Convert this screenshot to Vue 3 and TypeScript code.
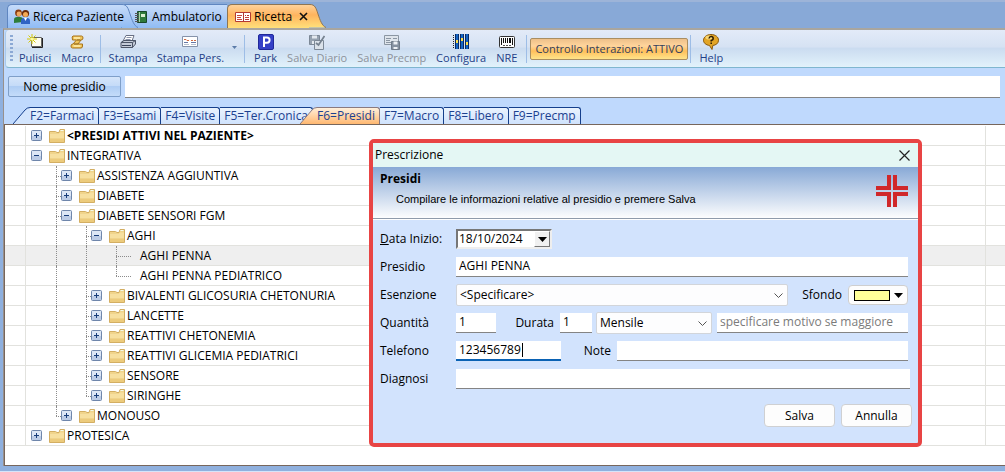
<script setup lang="ts">
import { ref } from 'vue'

interface ToolItem {
  label: string
  icon: string
  disabled?: boolean
  menu?: boolean
}

interface TreeNode {
  label: string
  level: number
  state: 'open' | 'closed' | 'leaf'
  last?: boolean
  bold?: boolean
}

const toolGroups: ToolItem[][] = [
  [
    { label: 'Pulisci', icon: 'new' },
    { label: 'Macro', icon: 'macro' },
  ],
  [
    { label: 'Stampa', icon: 'print' },
    { label: 'Stampa Pers.', icon: 'card', menu: true },
  ],
  [
    { label: 'Park', icon: 'park' },
    { label: 'Salva Diario', icon: 'savediary', disabled: true },
    { label: 'Salva Precmp', icon: 'saveform', disabled: true },
    { label: 'Configura', icon: 'config' },
    { label: 'NRE', icon: 'barcode' },
  ],
]

const sections = ['F2=Farmaci', 'F3=Esami', 'F4=Visite', 'F5=Ter.Cronica', 'F6=Presidi', 'F7=Macro', 'F8=Libero', 'F9=Precmp']
const activeSection = ref('F6=Presidi')

const nodes: TreeNode[] = [
  { label: '<PRESIDI ATTIVI NEL PAZIENTE>', level: 0, state: 'closed', bold: true },
  { label: 'INTEGRATIVA', level: 0, state: 'open' },
  { label: 'ASSISTENZA AGGIUNTIVA', level: 1, state: 'closed' },
  { label: 'DIABETE', level: 1, state: 'closed' },
  { label: 'DIABETE SENSORI FGM', level: 1, state: 'open' },
  { label: 'AGHI', level: 2, state: 'open' },
  { label: 'AGHI PENNA', level: 3, state: 'leaf' },
  { label: 'AGHI PENNA PEDIATRICO', level: 3, state: 'leaf', last: true },
  { label: 'BIVALENTI GLICOSURIA CHETONURIA', level: 2, state: 'closed' },
  { label: 'LANCETTE', level: 2, state: 'closed' },
  { label: 'REATTIVI CHETONEMIA', level: 2, state: 'closed' },
  { label: 'REATTIVI GLICEMIA PEDIATRICI', level: 2, state: 'closed' },
  { label: 'SENSORE', level: 2, state: 'closed' },
  { label: 'SIRINGHE', level: 2, state: 'closed', last: true },
  { label: 'MONOUSO', level: 1, state: 'closed', last: true },
  { label: 'PROTESICA', level: 0, state: 'closed' },
]
const selected = ref('AGHI PENNA')

const search = ref('')
const startDate = ref('18/10/2024')
const item = ref('AGHI PENNA')
const exemption = ref('<Specificare>')
const quantity = ref('1')
const duration = ref('1')
const period = ref('Mensile')
const reason = ref('')
const phone = ref('123456789')
const notes = ref('')
const diagnosis = ref('')
</script>

<template>
  <div class="app">
    <nav class="docs">
      <button class="doc first" type="button">
        <svg class="ic" viewBox="0 0 16 16">
          <circle cx="4.5" cy="4" r="3.4" fill="#8a3c10" /><circle cx="5" cy="5" r="2.4" fill="#f0a860" />
          <path d="M0 14V10.500Q0 8 3 8H6Q9 8 9 10.500V13z" fill="#2e7d3a" />
          <circle cx="11.500" cy="4.500" r="3.600" fill="#6b2a08" /><circle cx="11.500" cy="5.500" r="2.500" fill="#f3a955" />
          <path d="M7 15V12Q7 9 10 9H13Q16 9 16 12V15z" fill="#2f63c4" /><path d="M10 9h3l-1.500 3z" fill="#fff" />
        </svg>
        <span>Ricerca Paziente</span>
        <svg class="slope" viewBox="0 0 18 24"><path d="M0 .5H1C6 .5 7 4 9 10S13 22 17 23.500H0z" fill="url(#tabBlue)" /><path d="M0 .5H1C6 .5 7 4 9 10S13 22 17 23.500" fill="none" stroke="#5f86c0" /></svg>
      </button>
      <button class="doc second" type="button">
        <svg class="ic" viewBox="0 0 16 16">
          <path d="M4.500 2.500h9v11h-9z" fill="#2f7a3c" stroke="#17482a" /><path d="M6.500 3v10" stroke="#a9d6a4" />
          <path d="M2 4.500h4M2 6.500h4M2 8.500h4M2 10.500h4M2 12.500h4" stroke="#555" /><path d="M8 5h4v3H8z" fill="#d8eecf" />
        </svg>
        <span>Ambulatorio</span>
      </button>
      <button class="doc current" type="button">
        <svg class="ic" viewBox="0 0 16 16">
          <path d="M.5 3.500h15v9H.5z" fill="#fff" stroke="#b33a32" /><path d="M8.500 4v8" stroke="#b33a32" />
          <path d="M2 6.500h5M2 8.500h4M2 10.500h5M10 8.500h4" stroke="#c8453c" /><path d="M10 6.500h1M12 6.500h2M10 10.500h4" stroke="#b33a32" />
        </svg>
        <span>Ricetta</span>
        <svg class="close" viewBox="0 0 9 9"><path d="M1 1l7 7M8 1L1 8" stroke="#111" stroke-width="1.600" /></svg>
        <svg class="slope" viewBox="0 0 18 24"><path d="M0 .5H1C6 .5 7 4 9 10S13 22 17 23.500H0z" fill="url(#tabOrange)" /><path d="M0 .5H1C6 .5 7 4 9 10S13 22 17 23.500" fill="none" stroke="#8f7552" /></svg>
      </button>
      <svg class="defs">
        <linearGradient id="tabBlue" x1="0" y1="0" x2="0" y2="1"><stop offset="0" stop-color="#c5dcfa" /><stop offset=".5" stop-color="#aecbf5" /><stop offset="1" stop-color="#8fbcf5" /></linearGradient>
        <linearGradient id="tabOrange" x1="0" y1="0" x2="0" y2="1"><stop offset="0" stop-color="#ffd29a" /><stop offset=".45" stop-color="#ffb45e" /><stop offset="1" stop-color="#ffe07a" /></linearGradient>
      </svg>
    </nav>

    <div class="frame">
      <div class="toolbar">
        <i class="grip"></i>
        <div v-for="(group, g) in toolGroups" :key="g" class="group" :class="'g' + g">
          <button v-for="t in group" :key="t.label" class="tool" :class="{ menu: t.menu }" type="button" :disabled="t.disabled">
            <svg class="ic" viewBox="0 0 16 16">
              <template v-if="t.icon === 'new'">
                <path d="M4.500 3.500h10v9h-10z" fill="#fffef0" stroke="#666" /><path d="M15.500 4v9.500H5" fill="none" stroke="#222" />
                <path d="M5 0v10M0 5h10M1.500 1.500l7 7M8.500 1.500l-7 7" stroke="#d4c800" /><circle cx="5" cy="5" r="1.500" fill="#fffb9c" />
              </template>
              <template v-else-if="t.icon === 'macro'">
                <path d="M4 2h8.500Q14 2 14 4T12 6L9 10h4.500v2Q13.500 14 12 14H3.500Q2 14 2 12T4 10L7.500 6H3.500Q2.500 2 4 2z" fill="#f0c65c" stroke="#a87319" />
                <path d="M5 4h6M4.500 12h7" stroke="#fff0b0" stroke-width="1.500" /><path d="M11.500 6H8M9 10H5" stroke="#7d5310" />
              </template>
              <template v-else-if="t.icon === 'print'">
                <path d="M6 1.500h8L12 7H3z" fill="#fff" stroke="#687084" /><path d="M6.500 3.500h5M5.500 5.500h5" stroke="#8b94aa" />
                <path d="M1 8.500l3-2h11.500V10l-3 3.500H1z" fill="#c4cbd8" stroke="#4c5568" /><path d="M1 8.500h11.500l3-2M12.500 8.500v5" fill="none" stroke="#4c5568" /><path d="M2 11.500h9" stroke="#39435a" />
              </template>
              <template v-else-if="t.icon === 'card'">
                <path d="M.5 2.500h15v10H.5z" fill="#fff" stroke="#8593aa" /><path d="M2 5.500h2l1 1h2M9 6.500h2M12 6.500h2" fill="none" stroke="#cf6a42" />
                <path d="M2 8.500h4M9 8.500h5" stroke="#6677a4" /><path d="M2 10.500h5M9 10.500h5" stroke="#b8c0d0" />
              </template>
              <template v-else-if="t.icon === 'park'">
                <rect x=".5" y=".5" width="15" height="15" rx="1.500" fill="#3540c6" stroke="#20289a" />
                <path d="M6 13V3.500h3a2.600 2.600 0 010 5.200H6" fill="none" stroke="#fff" stroke-width="2" />
              </template>
              <template v-else-if="t.icon === 'savediary'">
                <path d="M.5 1.500h10v9H.5z" fill="#96a2b0" stroke="#7c8896" /><path d="M3 1.500h5v3H3zM3 7h5v3H3z" fill="#e4e9ef" />
                <path d="M5.500 6.500h9v9h-9z" fill="#dbe2ea" stroke="#7c8896" /><path d="M15.500 2L9.500 11l-2.500-2" fill="none" stroke="#76828f" stroke-width="1.800" />
              </template>
              <template v-else-if="t.icon === 'saveform'">
                <path d="M.5 1.500h14v9H.5z" fill="#dfe5ec" stroke="#8b96a3" /><path d="M2 4.500h5M2 6.500h4M2 8.500h5M9 4.500h4" stroke="#8b96a3" />
                <path d="M7.500 7.500h8v8h-8z" fill="#8591a0" stroke="#6f7b89" /><path d="M9.500 7.500h4v3h-4zM9.500 13h4v2h-4z" fill="#edf1f5" />
              </template>
              <template v-else-if="t.icon === 'config'">
                <path d="M2 0h4v15H2zM7 0h4v15H7zM12 0h4v15h-4z" fill="#1766c4" /><path d="M2.500 0v15M5.500 0v15M7.500 0v15M10.500 0v15M12.500 0v15M15.500 0v15" stroke="#082a63" />
                <path d="M.5 1v14" stroke="#222" stroke-dasharray="1 1" /><path d="M3 6h2v3H3zM8 4h2v3H8zM13 8h2v3h-2z" fill="#ffe048" />
              </template>
              <template v-else>
                <rect x=".5" y="2.500" width="15" height="11" rx="1" fill="#fff" stroke="#333" />
                <path d="M2.500 4v7M4.500 4v5M6.500 4v5M8.500 4v5M13.500 4v7" stroke="#111" /><path d="M11 4v5" stroke="#111" stroke-width="2" /><path d="M4 11.500h2M7 11.500h2M10 11.500h2" stroke="#555" />
              </template>
            </svg>
            <span>{{ t.label }}</span>
            <svg v-if="t.menu" class="drop" viewBox="0 0 5 3"><path d="M0 0h5L2.500 3z" fill="#5b7ba8" /></svg>
          </button>
        </div>
        <button class="toggle" type="button" aria-pressed="true">Controllo Interazioni: ATTIVO</button>
        <div class="group help">
          <button class="tool" type="button">
            <svg class="ic" viewBox="0 0 16 16">
              <path d="M8 .5C12.500.5 15.500 3 15.500 6.200S13 11 9.800 11.500L9 15.500 6.500 11.500C3 11 .5 9 .5 6.200S3.500.5 8 .5z" fill="#e2a526" stroke="#8a5a0c" />
              <ellipse cx="6" cy="3.500" rx="3.500" ry="2" fill="#f7d775" /><path d="M6 4.500Q6.300 2.500 8.200 2.500T10.200 4.300 8.200 6.500V7.500M8.200 8.500v1.500" fill="none" stroke="#2c1c04" stroke-width="1.500" />
            </svg>
            <span>Help</span>
          </button>
        </div>
      </div>

      <div class="search">
        <button class="name" type="button">Nome presidio</button>
        <input v-model="search" class="box" type="text" aria-label="Nome presidio" />
      </div>

      <nav class="sections">
        <button v-for="(s, i) in sections" :key="s" type="button" class="section" :class="{ active: s === activeSection }" @click="activeSection = s">
          <svg v-if="i === 0 || s === activeSection" class="slant" viewBox="0 0 17 17">
            <path d="M0 17L12 3Q14 .5 17 .5V17z" :fill="s === activeSection ? 'url(#secOrange)' : '#d3e5fd'" />
            <path d="M0 17L12 3Q14 .5 17 .5" fill="none" :stroke="s === activeSection ? '#8a7a80' : '#153f8c'" />
          </svg>
          <span>{{ s }}</span>
        </button>
        <svg class="defs"><linearGradient id="secOrange" x1="0" y1="0" x2="0" y2="1"><stop offset="0" stop-color="#fff0dc" /><stop offset="1" stop-color="#ffb871" /></linearGradient></svg>
      </nav>

      <main class="panel">
        <ul class="tree" role="tree">
          <li v-for="n in nodes" :key="n.label" class="row" :class="{ selected: n.label === selected }" role="treeitem" :aria-level="n.level + 1" @click="selected = n.label">
            <i class="margin"></i>
            <i v-for="k in n.level" :key="k" class="indent" :class="{ guide: k > 1 }"></i>
            <span class="knot" :class="{ child: n.level > 0, last: n.last, leaf: n.state === 'leaf' }">
              <button v-if="n.state !== 'leaf'" class="expander" type="button" :aria-label="n.label">
                <svg viewBox="0 0 11 11">
                  <rect x=".5" y=".5" width="10" height="10" rx="1" fill="#dce6f5" stroke="#6f86ab" /><path d="M1 6h9v4H1z" fill="#bccce6" />
                  <path d="M3 5.500h5" stroke="#173c7a" /><path v-if="n.state === 'closed'" d="M5.500 3v5" stroke="#173c7a" />
                </svg>
              </button>
            </span>
            <svg v-if="n.state !== 'leaf'" class="folder" viewBox="0 0 16 14">
              <path d="M.5 2.500h6l1.500 1h2l1-3h4.500v13H.5z" fill="#f0d48c" stroke="#d3ae62" /><path d="M1 5h8.500l1.500-1.500h4V9H1z" fill="#f7e0a0" />
              <path d="M1 10h14v3H1z" fill="#eccb7c" /><path d="M11.500 1.500h3" stroke="#f4fbe8" />
            </svg>
            <b v-if="n.bold" class="text">{{ n.label }}</b>
            <span v-else class="text">{{ n.label }}</span>
          </li>
        </ul>

        <form class="dialog" role="dialog" aria-labelledby="dlg-title" @submit.prevent>
          <header class="bar">
            <span id="dlg-title">Prescrizione</span>
            <button class="x" type="button" aria-label="Chiudi"><svg viewBox="0 0 11 11"><path d="M.5.5l10 10M10.500.5l-10 10" stroke="#222" stroke-width="1.200" /></svg></button>
          </header>
          <div class="banner">
            <div>
              <h1>Presidi</h1>
              <p>Compilare le informazioni relative al presidio e premere Salva</p>
            </div>
            <svg class="cross" viewBox="0 0 32 32"><path d="M11 0h4v15H0v-4h11zM17 0h4v11h11v4H17zM0 17h15v15h-4V21H0zM17 17h15v4H21v11h-4z" fill="#d0282a" /></svg>
          </div>

          <div class="fields">
            <div class="line">
              <label class="lead" for="date"><u>D</u>ata Inizio:</label>
              <div class="date">
                <input id="date" v-model="startDate" type="text" />
                <button type="button" aria-label="Calendario"><svg viewBox="0 0 9 5"><path d="M0 0h9L4.500 5z" /></svg></button>
              </div>
            </div>
            <div class="line">
              <label class="lead" for="item">Presidio</label>
              <input id="item" v-model="item" class="box grow" type="text" />
            </div>
            <div class="line">
              <label class="lead" for="ex">Esenzione</label>
              <div class="combo grow">
                <select id="ex" v-model="exemption"><option>&lt;Specificare&gt;</option></select>
                <svg viewBox="0 0 9 5"><path d="M.5.5l4 4 4-4" fill="none" stroke="#555" /></svg>
              </div>
              <label class="after sf" for="bg">Sfondo</label>
              <button id="bg" class="color" type="button"><i></i><svg viewBox="0 0 9 5"><path d="M0 0h9L4.500 5z" /></svg></button>
            </div>
            <div class="line">
              <label class="lead" for="qty">Quantità</label>
              <input id="qty" v-model="quantity" class="box qty" type="text" />
              <label class="after du" for="dur">Durata</label>
              <input id="dur" v-model="duration" class="box dur" type="text" />
              <div class="combo period">
                <select v-model="period" aria-label="Periodo"><option>Mensile</option></select>
                <svg viewBox="0 0 9 5"><path d="M.5.5l4 4 4-4" fill="none" stroke="#555" /></svg>
              </div>
              <input v-model="reason" class="box grow reason" type="text" placeholder="specificare motivo se maggiore" aria-label="Motivo" />
            </div>
            <div class="line">
              <label class="lead" for="tel">Telefono</label>
              <div class="box tel"><input id="tel" v-model="phone" type="text" /><i class="caret"></i></div>
              <label class="after no" for="note">Note</label>
              <input id="note" v-model="notes" class="box grow" type="text" />
            </div>
            <div class="line wide">
              <label class="lead" for="dia">Diagnosi</label>
              <input id="dia" v-model="diagnosis" class="box grow" type="text" />
            </div>
          </div>
          <footer class="actions">
            <button type="submit">Salva</button>
            <button type="button">Annulla</button>
          </footer>
        </form>
      </main>
    </div>
  </div>
</template>

<style>
body { margin: 0; }
</style>

<style scoped>
.app {
  box-sizing: border-box;
  display: flex;
  flex-direction: column;
  min-height: 100vh;
  padding: 0 0 5px 3px;
  background: #8fb0de;
  border-bottom: 1px solid #d4e4fa;
  font: 12px/16px "Open Sans", "Noto Sans", sans-serif;
  color: #000;
}
.app *, .app *::before, .app *::after { box-sizing: border-box; }
button, input, select { font: inherit; color: inherit; margin: 0; padding: 0; border: 0; background: none; border-radius: 0; outline: 0; }
svg { display: block; flex: none; }
.defs { position: absolute; width: 0; height: 0; }

.docs {
  display: flex;
  align-items: flex-end;
  height: 28px;
  padding-left: 4px;
  margin-left: -3px;
  background: #88a9d7;
  border-top: 2px solid #9db4d8;
}
.doc {
  position: relative;
  display: flex;
  align-items: center;
  height: 24px;
  border: 1px solid #5f86c0;
  border-right: 0;
  border-bottom: 0;
  border-radius: 5px 0 0 0;
  background: linear-gradient(#c5dcfa, #aecbf5 50%, #8fbcf5);
  white-space: nowrap;
}
.doc .ic { margin-right: 3px; }
.doc span { position: relative; z-index: 1; }
.slope { position: absolute; left: 100%; top: -1px; width: 18px; height: 24px; }
.first { z-index: 2; width: 114px; margin-left: 3px; padding-left: 6px; }
.second { width: 106px; padding-left: 11px; }
.current { width: 82px; padding-left: 7px; border-color: #8f7552; background: linear-gradient(#ffd29a, #ffb45e 45%, #ffe07a); }
.close { width: 9px; height: 9px; margin-left: 7px; }
.ic { width: 16px; height: 16px; }

.frame {
  flex: 1;
  display: flex;
  flex-direction: column;
  border-top: 2px solid #a9a69f;
  border-left: 1px solid #98908c;
  background: #bfd9fd;
}
.toolbar {
  display: flex;
  align-items: center;
  height: 38px;
  margin-left: 1px;
  border-bottom: 1px solid #7fb6cf;
  border-left: 1px solid #a9c9ea;
  border-radius: 4px 0 0 4px;
  background: linear-gradient(#e3ebf8, #d6e2f3 45%, #cbdcf0 50%, #e2f2fb);
  color: #1f3f87;
  font-size: 11px;
}
.grip { width: 3px; height: 28px; margin: 0 2px 0 4px; background: repeating-linear-gradient(#8ca9d4 0 2px, transparent 2px 4px); }
.group { display: flex; height: 28px; align-items: center; }
.group + .group, .help { border-left: 1px solid #9dbde6; }
.tool { position: relative; display: flex; flex-direction: column; align-items: center; padding: 2px 4px 0; white-space: nowrap; }
.tool:disabled { color: #8d929b; }
.g0 { padding-right: 2px; gap: 2px; }
.g1 { padding-left: 4px; gap: 1px; }
.g1 .menu { padding-right: 20px; }
.drop { position: absolute; right: 7px; top: 14px; width: 5px; height: 3px; }
.g2 { padding-left: 5px; padding-right: 5px; gap: 2px; border-right: 1px solid #9dbde6; margin-right: 3px; }
.toggle {
  height: 22px;
  padding: 0 4px;
  margin: 0 2px 0 0;
  border: 1px solid #a98e62;
  border-radius: 2px;
  background: linear-gradient(#eec08a, #ffd59c 35%, #ffbf5b 60%, #ffe48a);
  color: #33405c;
  white-space: nowrap;
}
.help { padding-left: 4px; }

.search { display: flex; gap: 4px; padding: 8px 5px 0 4px; }
.name {
  width: 113px;
  height: 21px;
  border: 1px solid #7f9fc9;
  border-radius: 2px;
  background: linear-gradient(#d5e5fa, #c5dbf8 45%, #afcdf4 50%, #c4dcf9);
}
.box { height: 20px; padding: 0 3px 2px; background: #fff; border-bottom: 1px solid #848484; }
.search .box { flex: 1; min-width: 0; height: 22px; }

.sections { display: flex; align-items: flex-end; height: 26px; padding-left: 26px; color: #1c4190; }
.section {
  position: relative;
  height: 17px;
  padding: 0 4px 0 4px;
  border: 1px solid #153f8c;
  border-width: 1px 1px 0 0;
  border-radius: 0 3px 0 0;
  background: linear-gradient(#eaf3fe, #cfe2fc);
  white-space: nowrap;
}
.section span { position: relative; }
.section:first-child { padding-left: 0; }
.slant { position: absolute; right: 100%; top: -1px; width: 17px; height: 17px; }
.active { z-index: 1; margin-left: 4px; padding-left: 0; border-color: #8a7a80; background: linear-gradient(#fff0dc, #ffb871); }

.panel { position: relative; flex: 1; border: 1px solid #77665c; border-right: 0; background: #fff; min-height: 341px; }
.tree { margin: 0; padding: 1px 0 0; list-style: none; }
.row { display: flex; align-items: center; height: 20px; border-bottom: 1px solid #e2e2de; padding-right: 19px; white-space: nowrap; position: relative; }
.row::after { content: ""; position: absolute; right: 19px; top: 0; bottom: 0; border-left: 1px solid #e2e2de; }
.selected { background: #efefef; }
.margin { width: 21px; height: 20px; border-right: 1px solid #e2e2de; }
.indent { width: 30px; height: 20px; }
.guide { border-left: 1px dotted #8c8c8c; }
.knot { position: relative; display: flex; align-items: center; width: 23px; height: 20px; padding-left: 5px; }
.child::before { content: ""; position: absolute; left: 0; top: 0; height: 20px; border-left: 1px dotted #8c8c8c; }
.child::after { content: ""; position: absolute; left: 0; top: 10px; width: 5px; border-top: 1px dotted #8c8c8c; }
.last::before { height: 10px; }
.leaf { width: 24px; }
.leaf::after { width: 15px; }
.expander { width: 11px; height: 11px; }
.expander svg { width: 11px; height: 11px; }
.folder { width: 16px; height: 14px; margin-right: 2px; }
.text { line-height: 16px; }

.dialog {
  position: absolute;
  left: 364px;
  right: 83px;
  top: 14px;
  border: 4px solid #e84444;
  border-radius: 5px;
  background: #d2e3fd;
}
.bar { display: flex; align-items: center; justify-content: space-between; height: 24px; padding: 0 8px 0 2px; background: #e4f7f4; }
.x, .x svg { width: 11px; height: 11px; }
.banner {
  display: flex;
  align-items: center;
  justify-content: space-between;
  height: 53px;
  padding: 0 10px 0 7px;
  border-bottom: 1px solid #fff;
  background: linear-gradient(#88a9d6, #fff);
  box-shadow: inset 0 -1px #8f9bab;
}
.banner h1 { margin: 0; font-size: 12px; line-height: 16px; font-weight: 700; }
.banner p { margin: 4px 0 8px 16px; font: 11px/16px "Liberation Sans", Arial, sans-serif; }
.cross { width: 32px; height: 32px; margin-bottom: 4px; }
.fields { padding: 5px 10px 0 7px; }
.line { display: flex; align-items: center; height: 28px; }
.wide { margin-right: -2px; }
.lead { flex: none; width: 76px; }
.grow { flex: 1; min-width: 0; }
.date { display: flex; width: 96px; height: 20px; background: #fff; border: 2px solid #777; border-right-color: #eee; border-bottom-color: #eee; }
.date input { flex: 1; min-width: 0; padding-left: 1px; }
.date button { display: grid; place-items: center; width: 16px; background: #f0f0f0; border: 1px solid #fff; border-right-color: #777; border-bottom-color: #777; }
.date svg, .color svg { width: 9px; height: 5px; }
.combo { position: relative; display: flex; height: 22px; background: #fdfdfe; border: 1px solid #d2d5da; border-radius: 2px; }
.combo select { flex: 1; min-width: 0; appearance: none; padding-left: 3px; }
.combo svg { position: absolute; right: 4px; top: 8px; width: 9px; height: 5px; pointer-events: none; }
.after { flex: none; text-align: right; padding-right: 6px; }
.sf { width: 60px; }
.color { display: flex; align-items: center; justify-content: center; gap: 4px; width: 60px; height: 20px; background: #fdfdfd; border: 1px solid #cfcfcf; border-radius: 4px; }
.color i { width: 36px; height: 11px; background: #ffff99; border: 1px solid #000; }
.qty { width: 40px; }
.du { width: 64px; }
.dur { width: 32px; margin-right: 4px; }
.period { width: 116px; margin-right: 5px; }
.reason::placeholder { color: #7b7b7b; opacity: 1; }
.tel { display: flex; align-items: center; width: 105px; border-bottom: 2px solid #0a62b4; padding-bottom: 0; }
.tel input { width: 63px; }
.caret { width: 1px; height: 14px; background: #000; }
.no { width: 56px; }
.actions { display: flex; justify-content: flex-end; gap: 6px; padding: 11px 6px 16px; }
.actions button { width: 71px; height: 23px; background: #fdfdfd; border: 1px solid #cfd0d2; border-radius: 4px; }
</style>
